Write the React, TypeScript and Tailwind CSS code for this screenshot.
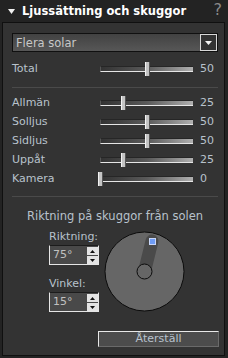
import React from "react";

const font = { fontFamily: '"DejaVu Sans", Verdana, sans-serif' };

function Slider({ value }: { value: number }) {
  return (
    <div className="relative w-[93px] h-[14px] flex items-center">
      <div className="w-full h-[6px] border-t border-t-[#262626] border-b border-b-[#e6e6e6] border-l border-l-[#555] bg-linear-to-r from-[#333333] via-[#5a5a5a] to-[#b0b0b0]" />
      <div
        className="absolute top-0 w-[5px] h-[14px] bg-[#c4c4c4] border-l border-l-[#f2f2f2] border-r border-r-[#555]"
        style={{ left: Math.round((value / 100) * 93) - 2 }}
      />
    </div>
  );
}

function Row({ label, value }: { label: string; value: number }) {
  return (
    <div className="flex items-center h-[19px]">
      <div className="w-[88px] text-[11px] leading-[14px] text-[#b8c2cc]">{label}</div>
      <Slider value={value} />
      <div className="ml-[7px] text-[11px] leading-[14px] text-[#b8c2cc]">{value}</div>
    </div>
  );
}

function Spinner({ value }: { value: string }) {
  return (
    <div className="flex w-[50px] h-[20px] bg-[#494949] border-t border-t-[#1c1c1c] border-l border-l-[#e6e6e6] border-b border-b-[#e6e6e6] border-r border-r-[#e6e6e6]">
      <div className="flex-1 pl-[3px] text-[11px] leading-[18px] text-[#c0c0c0]">{value}</div>
      <div className="flex flex-col w-[11px] mt-[1px] gap-[1px]">
        <div className="h-[8px] bg-[#e4e4e4] flex items-center justify-center">
          <svg width="5" height="3" viewBox="0 0 5 3"><path d="M2.5 0 L5 3 L0 3 Z" fill="#111" /></svg>
        </div>
        <div className="h-[8px] bg-[#e4e4e4] flex items-center justify-center">
          <svg width="5" height="3" viewBox="0 0 5 3"><path d="M0 0 L5 0 L2.5 3 Z" fill="#111" /></svg>
        </div>
      </div>
    </div>
  );
}

export default function App() {
  const rows = [
    { label: "Allmän", value: 25 },
    { label: "Solljus", value: 50 },
    { label: "Sidljus", value: 50 },
    { label: "Uppåt", value: 25 },
    { label: "Kamera", value: 0 },
  ];
  return (
    <div className="w-[228px] h-[358px] bg-[#232323] overflow-hidden" style={font}>
      <div className="h-[22px] flex items-center relative">
        <svg className="ml-[8px]" width="7" height="5" viewBox="0 0 7 5">
          <path d="M0 0 L7 0 L3.5 5 Z" fill="#f0f0f0" />
        </svg>
        <div className="ml-[7px] text-[11.5px] font-bold text-white leading-[14px]">Ljussättning och skuggor</div>
        <div className="absolute right-[6px] top-[1px] text-[16px] leading-[18px] text-[#8a8a8a]">?</div>
      </div>
      <div className="ml-[2px] w-[223px] h-[334px] border border-[#101010] bg-[#333333] pl-[9px] flex flex-col">
        <div className="mt-[10px] w-[206px] h-[19px] border border-[#101010] bg-linear-to-b from-[#424242] to-[#575757] flex items-center">
          <div className="flex-1 pl-[3px] text-[11.5px] leading-[14px] text-[#c8c8c8]">Flera solar</div>
          <div className="w-[17px] h-[17px] border border-[#d8d8d8] bg-[#333] flex items-center justify-center">
            <svg width="7" height="4" viewBox="0 0 7 4"><path d="M0 0 L7 0 L3.5 4 Z" fill="#f4f4f4" /></svg>
          </div>
        </div>
        <div className="mt-[7px]">
          <Row label="Total" value={50} />
        </div>
        <div className="mt-[9px] w-[206px] h-px bg-[#4a4a4a]" />
        <div className="mt-[5px] flex flex-col">
          {rows.map((r) => (
            <Row key={r.label} label={r.label} value={r.value} />
          ))}
        </div>
        <div className="mt-[8px] w-[206px] h-px bg-[#4a4a4a]" />
        <div className="mt-[12px] w-[206px] text-center text-[11.5px] leading-[14px] text-[#b8c2cc]">
          Riktning på skuggor från solen
        </div>
        <div className="mt-[7px] flex">
          <div className="ml-[37px] flex flex-col w-[50px]">
            <div className="h-[14px] text-[11px] leading-[14px] text-[#b8c2cc]">Riktning:</div>
            <div className="mt-[1px]">
              <Spinner value="75°" />
            </div>
            <div className="mt-[12px] h-[14px] text-[11px] leading-[14px] text-[#b8c2cc]">Vinkel:</div>
            <div className="mt-[1px]">
              <Spinner value="15°" />
            </div>
          </div>
          <svg className="ml-[5px] mt-[1px]" width="81" height="81" viewBox="0 0 81 81">
            <circle cx="40.5" cy="40.5" r="39.5" fill="#666666" stroke="#0c0c0c" strokeWidth="1" />
            <line x1="40.5" y1="40.5" x2="48" y2="10" stroke="#4a4a4a" strokeWidth="13" strokeLinecap="round" />
            <circle cx="40.5" cy="40.5" r="7.5" fill="#666666" stroke="#0c0c0c" strokeWidth="1" />
            <rect x="45.5" y="7.5" width="6" height="6" fill="#6f9cf5" stroke="#c8d6f8" strokeWidth="1" />
          </svg>
        </div>
        <div className="mt-[19px] ml-[86px] w-[121px] h-[16px] bg-[#4c4c4c] border-t border-t-[#e8e8e8] border-l border-l-[#e8e8e8] border-b border-b-[#6a6a6a] border-r border-r-[#6a6a6a] flex items-center justify-center text-[11px] leading-[14px] text-[#b8c2cc]">
          Återställ
        </div>
      </div>
    </div>
  );
}
